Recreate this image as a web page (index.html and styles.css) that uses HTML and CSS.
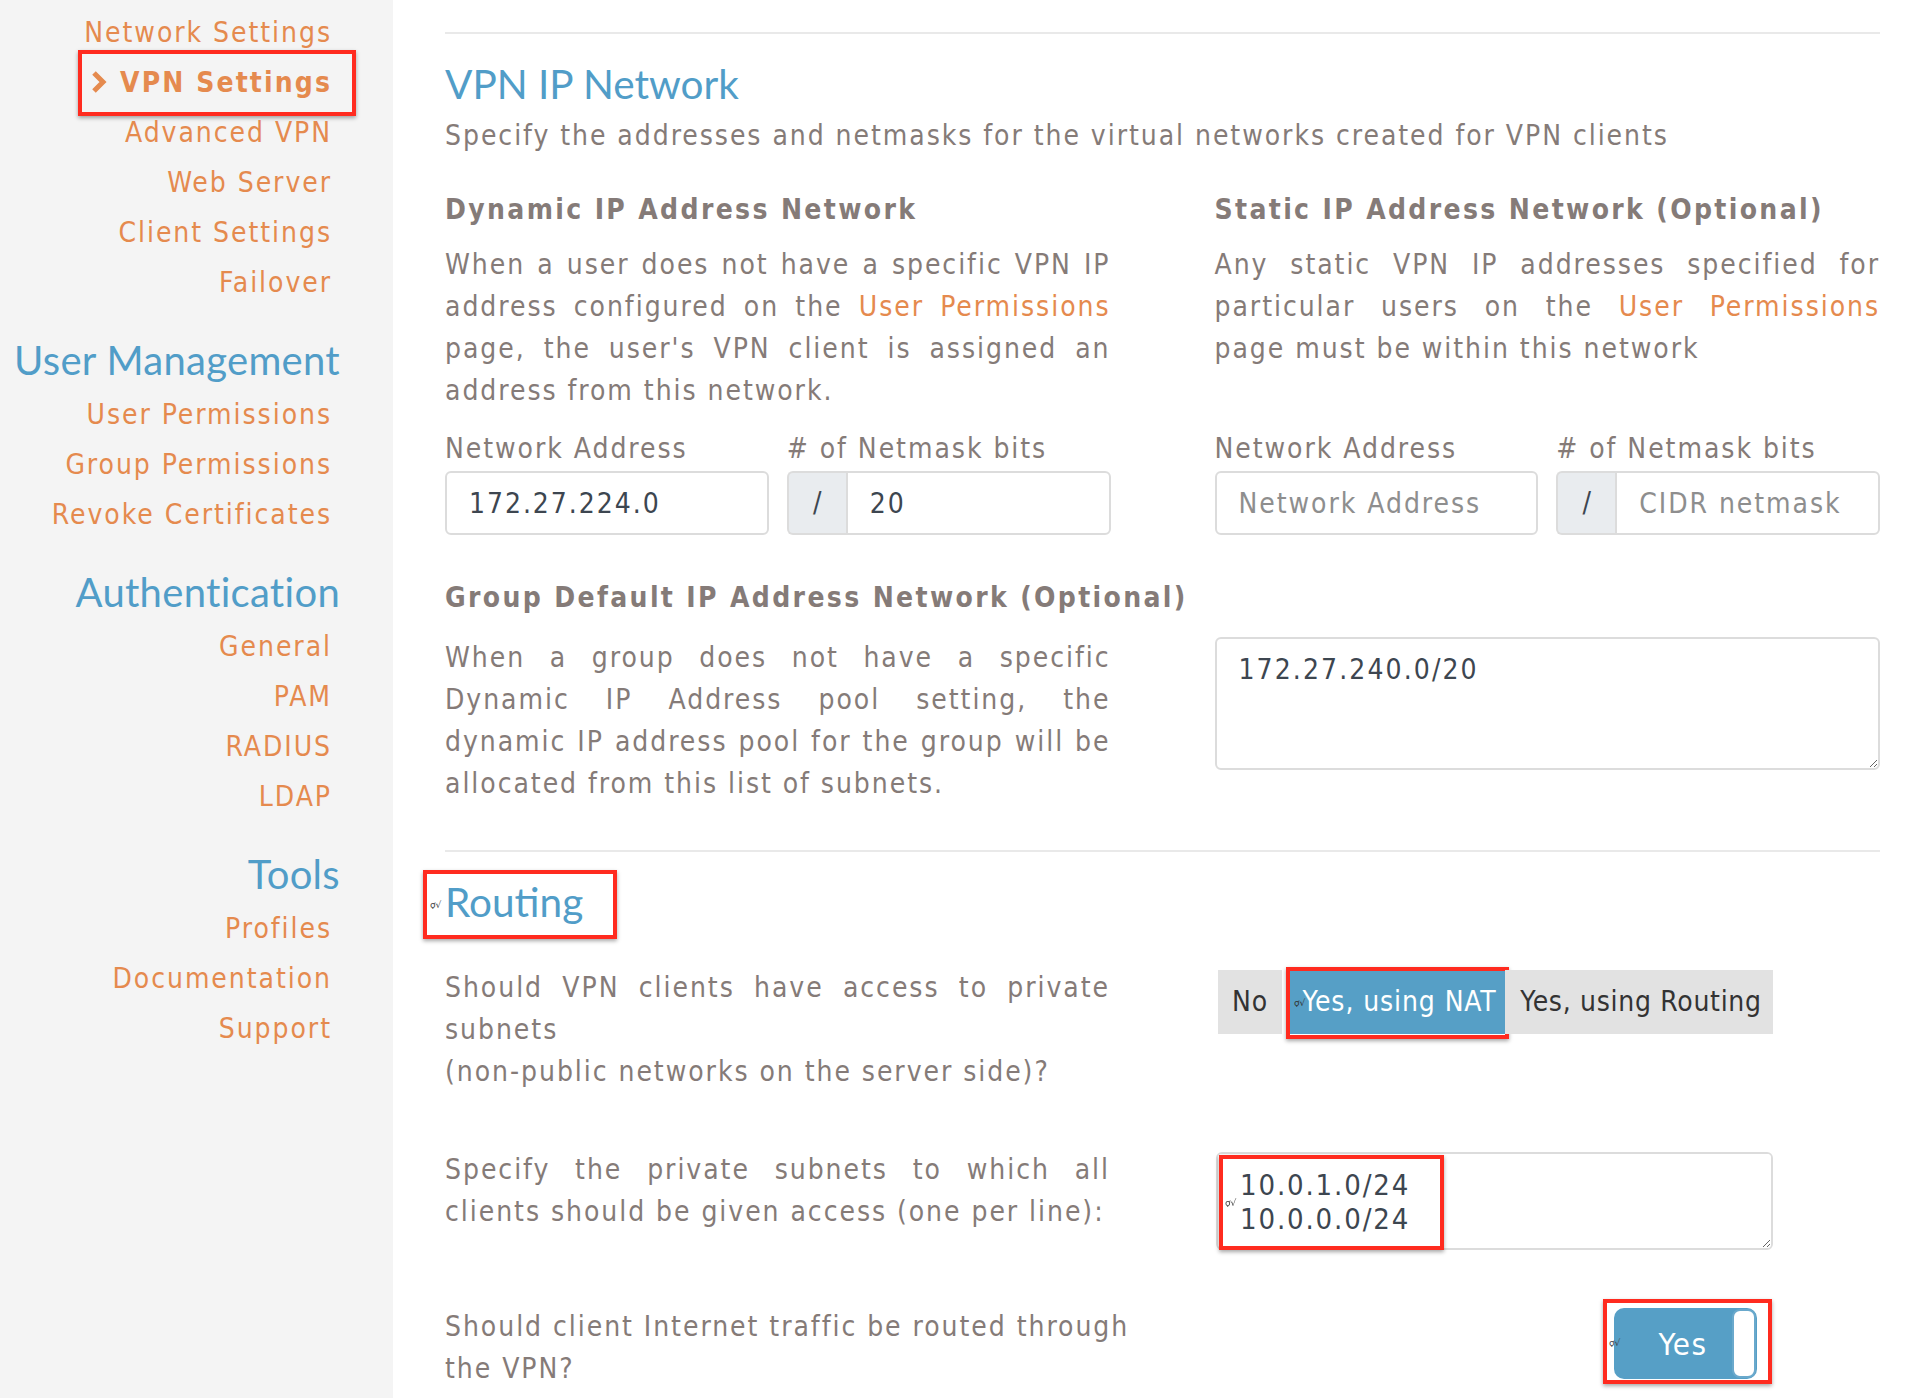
FILE: index.html
```html
<!DOCTYPE html>
<html lang="en">
<head>
<meta charset="utf-8">
<title>VPN Settings</title>
<link rel="stylesheet" href="styles.css">
</head>
<body>
<div class="page">
  <aside class="sidebar">
    <nav class="nav">
      <a class="nav-item" href="#">Network Settings</a>
      <a class="nav-item active" href="#"><svg class="chev" viewBox="0 0 18 24" width="18" height="24"><path d="M4 3 L13 12 L4 21" fill="none" stroke="#e58a4e" stroke-width="5"/></svg>VPN Settings<span class="annot annot-vpn"></span></a>
      <a class="nav-item" href="#">Advanced VPN</a>
      <a class="nav-item" href="#">Web Server</a>
      <a class="nav-item" href="#">Client Settings</a>
      <a class="nav-item" href="#">Failover</a>
      <div class="nav-head">User Management</div>
      <a class="nav-item" href="#">User Permissions</a>
      <a class="nav-item" href="#">Group Permissions</a>
      <a class="nav-item" href="#">Revoke Certificates</a>
      <div class="nav-head">Authentication</div>
      <a class="nav-item" href="#">General</a>
      <a class="nav-item" href="#">PAM</a>
      <a class="nav-item" href="#">RADIUS</a>
      <a class="nav-item" href="#">LDAP</a>
      <div class="nav-head">Tools</div>
      <a class="nav-item" href="#">Profiles</a>
      <a class="nav-item" href="#">Documentation</a>
      <a class="nav-item" href="#">Support</a>
    </nav>
  </aside>

  <main class="main">
    <div class="rule"></div>
    <h2 class="sec-title">VPN IP Network</h2>
    <p class="lead">Specify the addresses and netmasks for the virtual networks created for VPN clients</p>

    <div class="cols cols-net">
      <h4 class="sub">Dynamic IP Address Network</h4>
      <h4 class="sub">Static IP Address Network (Optional)</h4>
      <p class="para">When a user does not have a specific VPN IP address configured on the <a href="#">User Permissions</a> page, the user's VPN client is assigned an address from this network.</p>
      <p class="para">Any static VPN IP addresses specified for particular users on the <a href="#">User Permissions</a> page must be within this network</p>
      <div class="fields">
        <div class="field">
          <label class="label">Network Address</label>
          <input class="input" type="text" value="172.27.224.0">
        </div>
        <div class="field">
          <label class="label"># of Netmask bits</label>
          <div class="igroup"><span class="addon">/</span><input class="input" type="text" value="20"></div>
        </div>
      </div>
      <div class="fields">
        <div class="field">
          <label class="label">Network Address</label>
          <input class="input" type="text" placeholder="Network Address">
        </div>
        <div class="field">
          <label class="label"># of Netmask bits</label>
          <div class="igroup"><span class="addon">/</span><input class="input" type="text" placeholder="CIDR netmask"></div>
        </div>
      </div>
    </div>

    <h4 class="sub sub-wide">Group Default IP Address Network (Optional)</h4>
    <div class="cols cols-group">
      <p class="para">When a group does not have a specific Dynamic IP Address pool setting, the dynamic IP address pool for the group will be allocated from this list of subnets.</p>
      <textarea class="area area-group">172.27.240.0/20</textarea>
    </div>

    <div class="rule rule-2"></div>
    <h2 class="sec-title routing"><span class="mark mark-routing">ợ√</span>Routing<span class="annot annot-routing"></span></h2>

    <div class="opt-row opt-first">
      <p class="opt-label">Should VPN clients have access to private subnets<br>(non-public networks on the server side)?</p>
      <div class="opt-ctrl">
        <div class="btn-group">
          <span class="btn btn-no">No</span>
          <span class="btn btn-nat"><span class="mark mark-nat">ợ√</span>Yes, using NAT<span class="annot annot-nat"></span></span>
          <span class="btn btn-route">Yes, using Routing</span>
        </div>
      </div>
    </div>

    <div class="opt-row">
      <p class="opt-label">Specify the private subnets to which all clients should be given access (one per line):</p>
      <div class="opt-ctrl">
        <div class="area-wrap">
          <textarea class="area area-subnets">10.0.1.0/24
10.0.0.0/24</textarea>
          <span class="mark mark-area">ợ√</span>
          <span class="annot annot-area"></span>
        </div>
      </div>
    </div>

    <div class="opt-row opt-last">
      <p class="opt-label opt-label-wide">Should client Internet traffic be routed through the VPN?</p>
      <div class="opt-ctrl opt-ctrl-end">
        <div class="toggle">
          <span class="mark mark-toggle">ợ√</span>
          <span class="toggle-on">Yes</span>
          <span class="toggle-knob"></span>
          <span class="annot annot-toggle"></span>
        </div>
      </div>
    </div>
  </main>
</div>
</body>
</html>
```

FILE: styles.css
```css
* { box-sizing: border-box; }
html, body { margin: 0; padding: 0; }
body {
  font-family: "DejaVu Sans Condensed", "DejaVu Sans", sans-serif;
  font-stretch: condensed;
  font-size: 28px;
  line-height: 42px;
  letter-spacing: 1.95px;
  color: #857b78;
  background: #fff;
}
.page { display: flex; min-height: 1398px; }

/* sidebar */
.sidebar { width: 393px; flex: none; background: #f4f4f4; padding-top: 8px; }
.nav { display: flex; flex-direction: column; text-align: right; padding-right: 61px; }
.nav-item {
  display: block; position: relative;
  color: #e58a4e; text-decoration: none; line-height: 50px;
}
.nav-item.active { font-weight: bold; letter-spacing: 2.1px; }
.chev { display: inline-block; vertical-align: -2px; margin-right: 12px; }
.nav-head {
  font-family: Lato, "Open Sans", sans-serif; letter-spacing: 0.3px;
  color: #519dc8; font-size: 40px; line-height: 50px;
  margin: 27px -8px 5px 0;
}

/* annotations */
.annot {
  position: absolute; border: 4px solid #ff2b1f;
  box-shadow: 0 2px 4px rgba(0,0,0,0.35);
  pointer-events: none;
}
.annot-vpn { left: 78px; right: -24px; top: -8px; bottom: -8px; }
.mark {
  position: absolute; font-family: "DejaVu Sans", sans-serif; font-size: 9px;
  line-height: 10px; color: #444; font-weight: normal; font-stretch: normal; letter-spacing: 0;
}

/* main */
.main { flex: 1; padding: 32px 28px 0 52px; }
.rule { border-top: 2px solid #e9e9e9; }
.sec-title {
  position: relative;
  font-family: Lato, "Open Sans", sans-serif; font-weight: normal; letter-spacing: 0;
  font-size: 40.5px; line-height: 50px; color: #519dc8; margin: 25px 0 0;
}
.lead { margin: 6px 0 0; }
.cols { display: grid; grid-template-columns: 1fr 1fr; column-gap: 104px; }
.sub { font-weight: bold; font-size: 28px; line-height: 42px; letter-spacing: 2.35px; margin: 32px 0 0; }
.para { margin: 13px 0 0; text-align: justify; }
.para a { color: #e58a4e; text-decoration: none; }
.fields { display: grid; grid-template-columns: 1fr 1fr; column-gap: 18px; margin-top: 16px; }
.label { display: block; line-height: 42px; margin-bottom: 1px; }
.input {
  display: block; width: 100%; height: 64px;
  border: 2px solid #dcdcdc; border-radius: 6px; padding: 0 22px;
  font: inherit; font-stretch: condensed; letter-spacing: 1.95px;
  color: #3d4650; background: #fff; outline: none;
}
.input::placeholder { color: #8e8e8e; }
.igroup { display: flex; }
.addon {
  width: 59px; flex: none; background: #e9ecef;
  border: 2px solid #dcdcdc; border-right: 0; border-radius: 6px 0 0 6px;
  text-align: center; line-height: 60px; color: #3d4650; letter-spacing: 0;
}
.igroup .input { border-radius: 0 6px 6px 0; }

.sub-wide { white-space: nowrap; margin-top: 42px; }
.cols-group .para { margin-top: 18px; }
.area {
  display: block; width: 100%; resize: vertical;
  border: 2px solid #dcdcdc; border-radius: 6px;
  padding: 14px 22px; font: inherit; font-stretch: condensed; letter-spacing: 2.1px;
  line-height: 34px; color: #3d4650; background: #fff; outline: none;
}
.area-group { margin-top: 18px; height: 133px; }

.rule-2 { margin-top: 45px; }
.routing .mark-routing { left: -15px; top: 23px; }
.annot-routing { left: -22px; top: -7px; width: 194px; height: 69px; }

/* option rows */
.opt-row { display: grid; grid-template-columns: 665px 106px 557px; margin-top: 56px; }
.opt-first { margin-top: 40px; }
.opt-label { grid-column: 1; margin: 0; text-align: justify; }
.opt-label-wide { grid-column: 1 / 3; text-align: left; width: 700px; }
.opt-ctrl { grid-column: 3; }

.btn-group { display: flex; margin: 3px 0 0 2px; }
.btn {
  position: relative; display: block; height: 64px; line-height: 64px;
  text-align: center; background: #e2e2e2; color: #333; white-space: nowrap;
}
.btn-no { width: 64px; margin-right: 8px; letter-spacing: 1px; }
.btn-nat { width: 215px; background: #569fc6; color: #fff; letter-spacing: 0.9px; padding-left: 4px; }
.btn-route { width: 268px; letter-spacing: 0.7px; padding-left: 4px; }
.mark-nat { left: 4px; top: 28px; color: #333; }
.annot-nat { left: -4px; right: -4px; top: -3px; bottom: -5px; }

.area-wrap { position: relative; margin-top: 3px; }
.area-subnets { height: 98px; font-size: 29px; letter-spacing: 1.85px; }
.mark-area { left: 9px; top: 46px; }
.annot-area { left: 3px; top: 3px; width: 225px; height: 95px; }

.opt-ctrl-end { display: flex; justify-content: flex-end; padding-right: 16px; }
.toggle {
  position: relative; width: 143px; height: 71px; margin-top: 2px;
  background: #569fc6; border-radius: 10px;
  display: flex; align-items: center;
}
.toggle-on { flex: 1; text-align: center; color: #fff; font-size: 31px; padding-left: 20px; letter-spacing: 1.5px; }
.toggle-knob {
  width: 24px; height: 69px; margin-right: 1px;
  background: #fff; border: 2px solid #6aa9cc; border-radius: 8px;
}
.mark-toggle { left: -5px; top: 30px; }
.annot-toggle { left: -11px; top: -9px; width: 169px; height: 85px; }
```
